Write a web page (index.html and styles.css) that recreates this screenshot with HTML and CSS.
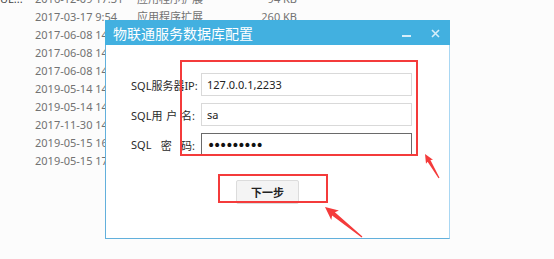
FILE: index.html
```html
<!DOCTYPE html>
<html lang="zh-cn">
<head>
  <meta charset="UTF-8">
  <title>物联通服务数据库配置</title>
  <link rel="stylesheet" href="styles.css">
</head>
<body>

  <!-- Explorer list behind the dialog -->
  <div class="file-list">
    <div class="file-row"><span class="f-name">UL...</span><span class="f-date">2016-12-09 17:31</span><span class="f-type">应用程序扩展</span><span class="f-size">94 KB</span></div>
    <div class="file-row"><span class="f-name"></span><span class="f-date">2017-03-17 9:54</span><span class="f-type">应用程序扩展</span><span class="f-size">260 KB</span></div>
    <div class="file-row"><span class="f-name"></span><span class="f-date">2017-06-08 14:22</span><span class="f-type">应用程序扩展</span><span class="f-size">48 KB</span></div>
    <div class="file-row"><span class="f-name"></span><span class="f-date">2017-06-08 14:22</span><span class="f-type">应用程序扩展</span><span class="f-size">112 KB</span></div>
    <div class="file-row"><span class="f-name"></span><span class="f-date">2017-06-08 14:22</span><span class="f-type">应用程序扩展</span><span class="f-size">36 KB</span></div>
    <div class="file-row"><span class="f-name"></span><span class="f-date">2019-05-14 14:10</span><span class="f-type">应用程序扩展</span><span class="f-size">72 KB</span></div>
    <div class="file-row"><span class="f-name"></span><span class="f-date">2019-05-14 14:10</span><span class="f-type">应用程序扩展</span><span class="f-size">20 KB</span></div>
    <div class="file-row"><span class="f-name"></span><span class="f-date">2017-11-30 14:05</span><span class="f-type">应用程序扩展</span><span class="f-size">88 KB</span></div>
    <div class="file-row"><span class="f-name"></span><span class="f-date">2019-05-15 16:41</span><span class="f-type">应用程序扩展</span><span class="f-size">16 KB</span></div>
    <div class="file-row"><span class="f-name"></span><span class="f-date">2019-05-15 17:02</span><span class="f-type">应用程序扩展</span><span class="f-size">24 KB</span></div>
  </div>

  <!-- Dialog -->
  <div class="dialog">
    <div class="dialog-title">
      <span class="title-text">物联通服务数据库配置</span>
      <span class="title-btns">
        <span class="btn-min"></span>
        <svg class="btn-close" width="9" height="9" viewBox="0 0 9 9">
          <path d="M1 1 L8 8 M8 1 L1 8" stroke="#d6eefa" stroke-width="1.6" fill="none"/>
        </svg>
      </span>
    </div>
    <div class="dialog-body">
      <div class="form-row">
        <label class="form-label"><span>SQL服务器IP:</span></label>
        <input class="form-input" type="text" value="127.0.0.1,2233">
      </div>
      <div class="form-row">
        <label class="form-label"><span>SQL用</span><span>户</span><span>名:</span></label>
        <input class="form-input" type="text" value="sa">
      </div>
      <div class="form-row">
        <label class="form-label"><span>SQL</span><span>密</span><span>码:</span></label>
        <input class="form-input focused" type="password" value="123456789">
      </div>
      <div class="btn-row">
        <button class="next-btn">下一步</button>
      </div>
    </div>
  </div>

  <!-- Red annotations -->
  <div class="mark mark-form"></div>
  <div class="mark mark-btn"></div>
  <svg class="arrows" width="554" height="259" viewBox="0 0 554 259">
    <polygon fill="#f43b3b" points="425,154 433,159.8 430.4,160.1 439.5,177.7 438.5,178.3 427.6,161.7 426,163.8"/>
    <polygon fill="#f43b3b" points="325,207 338.9,210.5 334.9,212.2 362.4,236.5 361.6,237.5 332.1,215.6 331.3,219.9"/>
  </svg>

</body>
</html>
```

FILE: styles.css
```css
body {
  margin: 0;
  background-color: #fcfcfc;
  font-family: "Noto Sans", "Noto Sans CJK SC", sans-serif;
  overflow: hidden;
}

.file-list {
  margin-top: -10px;
}

.file-row {
  display: flex;
  height: 18px;
  line-height: 18px;
  font-size: 11px;
  color: #727272;
  white-space: nowrap;
}

.f-name {
  width: 35px;
  overflow: hidden;
  color: #444;
}

.f-date {
  width: 102px;
}

.f-type {
  width: 100px;
}

.f-size {
  width: 60px;
  text-align: right;
}

.dialog {
  position: absolute;
  left: 105px;
  top: 20px;
  width: 343px;
  height: 218px;
  background-color: #fff;
  border: 1px solid #62b0dc;
  border-right-color: #a9d7f3;
  border-top: none;
}

.dialog-title {
  display: flex;
  align-items: center;
  justify-content: space-between;
  height: 25px;
  margin-left: -1px;
  margin-right: -1px;
  padding: 0 10px 0 8px;
  background-color: #42b0e0;
}

.title-text {
  color: #fff;
  font-size: 14px;
}

.title-btns {
  display: flex;
  align-items: center;
  gap: 20px;
  padding-top: 1px;
}

.btn-min {
  display: block;
  width: 9px;
  height: 2px;
  margin-top: 6px;
  background-color: #d6eefa;
}

.btn-close {
  display: block;
}

.dialog-body {
  padding: 28px 0 0 25px;
}

.form-row {
  display: flex;
  align-items: center;
  gap: 6px;
  margin-bottom: 7px;
}

.form-label {
  display: flex;
  justify-content: space-between;
  width: 64px;
  font-size: 11px;
  color: #2a2a2a;
  white-space: nowrap;
}

.form-input {
  box-sizing: border-box;
  width: 211px;
  height: 23px;
  padding: 0 5px;
  border: 1px solid #d9d9d9;
  font-family: "Noto Sans", "Noto Sans CJK SC", sans-serif;
  font-size: 11px;
  color: #222;
  outline: none;
}

.form-input.focused {
  border-color: #6a6a6a;
  font-family: "DejaVu Sans", sans-serif;
  font-size: 14px;
  letter-spacing: -2.2px;
  color: #111;
}

.btn-row {
  padding: 17px 0 0 105px;
}

.next-btn {
  width: 63px;
  height: 24px;
  background-color: #f4f4f4;
  border: 1px solid #dcdcdc;
  border-radius: 2px;
  font-family: "Noto Sans", "Noto Sans CJK SC", sans-serif;
  font-size: 11px;
  font-weight: bold;
  color: #222;
}

.mark {
  position: absolute;
  border: 2px solid #f43b3b;
}

.mark-form {
  left: 180px;
  top: 60px;
  width: 234px;
  height: 92px;
}

.mark-btn {
  left: 218px;
  top: 174px;
  width: 106px;
  height: 25px;
}

.arrows {
  position: absolute;
  left: 0;
  top: 0;
  pointer-events: none;
}
```
